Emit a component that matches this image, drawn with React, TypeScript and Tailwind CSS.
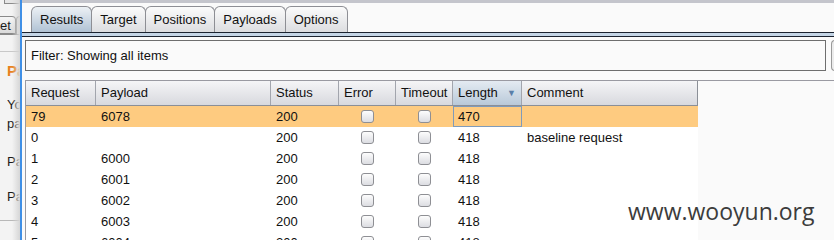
import React from "react";

const cols = [
  { name: "Request", w: "w-[70px]" },
  { name: "Payload", w: "w-[175px]" },
  { name: "Status", w: "w-[68px]" },
  { name: "Error", w: "w-[57px]" },
  { name: "Timeout", w: "w-[57px]" },
  { name: "Length", w: "w-[69px]" },
  { name: "Comment", w: "w-[176px]" },
];

const rows = [
  { req: "79", payload: "6078", status: "200", length: "470", comment: "", selected: true },
  { req: "0", payload: "", status: "200", length: "418", comment: "baseline request" },
  { req: "1", payload: "6000", status: "200", length: "418", comment: "" },
  { req: "2", payload: "6001", status: "200", length: "418", comment: "" },
  { req: "3", payload: "6002", status: "200", length: "418", comment: "" },
  { req: "4", payload: "6003", status: "200", length: "418", comment: "" },
  { req: "5", payload: "6004", status: "200", length: "418", comment: "" },
];

const tabs = ["Results", "Target", "Positions", "Payloads", "Options"];

function Checkbox() {
  return (
    <div className="h-[13px] w-[13px] rounded-[3px] border border-[#8e8f94] bg-gradient-to-b from-[#fdfdfd] to-[#dcdde2]" />
  );
}

function BackWindow() {
  return (
    <div className="relative flex w-[20px] shrink-0 flex-col overflow-hidden bg-[#f3f3f3] text-[13px] text-[#1a1a1a]">
      <div className="ml-[4px] h-[4px] shrink-0 border-x border-b border-[#8a8a8a] bg-[#e6e6e6]" />
      <div className="mt-[12px] flex h-[18px] shrink-0">
        <div className="flex w-[16px] shrink-0 items-center overflow-hidden rounded-tr-[4px] border-y border-r border-[#8a8a8a] bg-gradient-to-b from-[#f6f6f6] to-[#dadada]">
          <span className="leading-none">et</span>
        </div>
        <div className="w-[6px] shrink-0 rounded-tl-[4px] border-l border-t border-[#8a8a8a] bg-[#e4e4e4]" />
      </div>
      <div className="h-px shrink-0 bg-[#8a8a8a]" />
      <div className="mt-[16px] h-px shrink-0 bg-[#c8c8c8]" />
      <div className="ml-[7px] mt-[10px] h-[18px] shrink-0 overflow-hidden whitespace-nowrap text-[15px] font-bold leading-[18px] text-[#e8821e]">Pa</div>
      <div className="ml-[7px] mt-[15px] h-[19px] shrink-0 overflow-hidden whitespace-nowrap leading-[19px]">Yo</div>
      <div className="ml-[7px] h-[19px] shrink-0 overflow-hidden whitespace-nowrap leading-[19px]">pa</div>
      <div className="ml-[7px] mt-[19px] h-[19px] shrink-0 overflow-hidden whitespace-nowrap leading-[19px]">Pa</div>
      <div className="ml-[7px] mt-[16px] h-[19px] shrink-0 overflow-hidden whitespace-nowrap leading-[19px]">Pa</div>
      <div className="mt-[14px] h-px shrink-0 bg-[#b8b8b8]" />
      <div className="absolute inset-y-0 right-0 w-[8px] bg-gradient-to-r from-transparent to-[#d6d6d6]" />
    </div>
  );
}

export default function App() {
  return (
    <div
      className="relative flex h-[240px] w-[834px] overflow-hidden bg-[#fafafa]"
      style={{ fontFamily: '"Liberation Sans", Arial, sans-serif' }}
    >
      <BackWindow />
      <div className="w-[2px] shrink-0 bg-[#3f8fe6]" />
      <div className="flex min-w-0 flex-1 flex-col">
        <div className="h-[3px] shrink-0 bg-[#c4c5cc]" />
        <div className="mt-[3px] flex h-[26px] shrink-0 pl-[9px]">
          {tabs.map((t, i) => (
            <div
              key={t}
              className={
                "flex items-center rounded-t-[6px] border border-b-0 border-[#8d8e94] px-[8px] text-[13px] text-[#111] " +
                (i > 0 ? "-ml-px " : "") +
                (i === 0
                  ? "bg-gradient-to-b from-[#edf1f5] to-[#b0c2d4]"
                  : "bg-gradient-to-b from-[#fbfbfb] to-[#dcdde0]")
              }
            >
              {t}
            </div>
          ))}
        </div>
        <div className="h-px shrink-0 bg-[#1b2330]" />
        <div className="h-[3px] shrink-0 bg-[#c4d5e6]" />
        <div className="h-px shrink-0 bg-[#1b2330]" />
        <div className="mt-[3px] flex h-[31px] shrink-0 overflow-hidden">
          <div className="ml-[3px] flex w-[801px] shrink-0 items-center border border-[#6e6e6e] bg-[#fafafa] pl-[5px] text-[13px] text-[#111]">
            Filter: Showing all items
          </div>
          <div className="ml-[5px] w-[12px] shrink-0 rounded-l-[4px] border border-r-0 border-[#9a9a9a] bg-[#ececec]" />
        </div>
        <div className="ml-[3px] mt-[9px] flex-1 shrink-0 border-l border-t border-[#9a9aa2]">
          <div className="w-[672px] bg-white">
            <div className="flex h-[25px] border-b border-[#8b8f97]">
              {cols.map((c, i) => (
                <div
                  key={c.name}
                  className={
                    c.w +
                    " relative flex items-center pl-[5px] text-[13px] text-[#111] " +
                    (i < cols.length - 1 ? "border-r border-[#a2a5ad] " : "border-r border-[#8b8f97] ") +
                    (c.name === "Length"
                      ? "bg-gradient-to-b from-[#e4ebf2] to-[#b9c9d9]"
                      : "bg-gradient-to-b from-[#f5f5f7] to-[#d8d9de]")
                  }
                >
                  {c.name}
                  {c.name === "Length" && (
                    <span className="absolute right-[5px] top-[8px] text-[9px] leading-none text-[#5a7fa8]">▼</span>
                  )}
                </div>
              ))}
            </div>
            {rows.map((r) => (
              <div
                key={r.req}
                className={"flex h-[21px] text-[13px] text-[#111] " + (r.selected ? "bg-[#fecb80]" : "bg-white")}
              >
                <div className="flex w-[70px] items-center pl-[5px]">{r.req}</div>
                <div className="flex w-[175px] items-center pl-[5px]">{r.payload}</div>
                <div className="flex w-[68px] items-center pl-[5px]">{r.status}</div>
                <div className="flex w-[57px] items-center justify-center">
                  <Checkbox />
                </div>
                <div className="flex w-[57px] items-center justify-center">
                  <Checkbox />
                </div>
                <div
                  className={
                    "flex w-[69px] items-center " +
                    (r.selected ? "border border-[#7f9bbb] pl-[4px]" : "pl-[5px]")
                  }
                >
                  {r.length}
                </div>
                <div className="flex w-[176px] items-center pl-[5px]">{r.comment}</div>
              </div>
            ))}
          </div>
        </div>
      </div>
      <div
        className="absolute left-[628px] top-[197px] text-[23px] leading-[28px] text-[#3c3c3c]"
        style={{ fontFamily: '"Open Sans", "Noto Sans", sans-serif' }}
      >
        www.wooyun.org
      </div>
    </div>
  );
}
